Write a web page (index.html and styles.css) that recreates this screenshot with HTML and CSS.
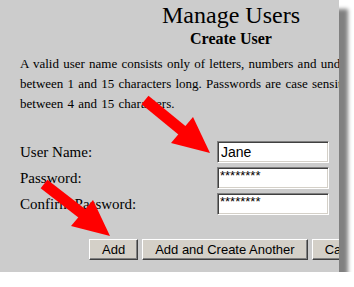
FILE: index.html
```html
<!DOCTYPE html>
<html lang="en">
<head>
  <meta charset="UTF-8" />
  <title>Manage Users</title>
  <link rel="stylesheet" href="styles.css">
</head>
<body>
  <div class="window">
    <div class="page">
      <h1>Manage Users</h1>
      <h3>Create User</h3>
      <p class="help">A valid user name consists only of letters, numbers and underscores and must be<br>
        between 1 and 15 characters long. Passwords are case sensitive and must be<br>
        between 4 and 15 characters.</p>

      <div class="form">
        <label>User Name:</label>
        <input class="field" type="text" value="Jane">
        <label>Password:</label>
        <input class="field secret" type="text" value="********">
        <label>Confirm Password:</label>
        <input class="field secret" type="text" value="********">
      </div>

      <div class="buttons">
        <button>Add</button>
        <button>Add and Create Another</button>
        <button>Cancel</button>
      </div>
    </div>

    <svg class="arrows" width="339" height="272" viewBox="0 0 339 272">
      <line x1="145" y1="100" x2="184" y2="132" stroke="#ff0000" stroke-width="11" />
      <polygon points="171,143 193,117 210,153" fill="#ff0000" />
      <line x1="44" y1="184" x2="84" y2="215" stroke="#ff0000" stroke-width="11" />
      <polygon points="71,226 93,200 110,236" fill="#ff0000" />
    </svg>
  </div>
</body>
</html>
```

FILE: styles.css
```css
body {
  margin: 0;
  padding: 0;
  background: #fff;
  font-family: 'Liberation Serif', 'Times New Roman', serif;
  color: #000;
}
.window {
  position: relative;
  width: 339px;
  height: 272px;
  background: #cccccc;
  overflow: hidden;
  box-shadow: 9px 9px 4px #808080;
}
.page {
  width: 422px;
  padding: 1px 0 0 20px;
}
h1 {
  margin: 0;
  font-size: 24px;
  font-weight: normal;
  line-height: 28px;
  text-align: center;
}
h3 {
  margin: 0;
  font-size: 16px;
  font-weight: bold;
  line-height: 20px;
  text-align: center;
}
.help {
  margin: 5px 0 0;
  font-size: 13px;
  line-height: 20px;
  word-spacing: 1px;
  white-space: nowrap;
}
.form {
  display: grid;
  grid-template-columns: 197px 112px;
  grid-auto-rows: 22px;
  row-gap: 4px;
  margin-top: 27px;
}
.form label {
  font-size: 15px;
  line-height: 22px;
}
.field {
  box-sizing: border-box;
  width: 112px;
  height: 22px;
  margin: 0;
  padding: 0 3px;
  background: #fff;
  border: 1px solid;
  border-color: #808080 #ffffff #ffffff #808080;
  box-shadow: inset 1px 1px #404040, inset -1px -1px #d4d0c8;
  font-family: 'Liberation Sans', Arial, sans-serif;
  font-size: 14px;
  color: #000;
  outline: none;
}
.field.secret {
  font-size: 13px;
  padding: 0 2px 5px;
}
.buttons {
  display: flex;
  gap: 4px;
  margin: 24px 0 0 69px;
}
button {
  box-sizing: border-box;
  height: 21px;
  margin: 0;
  padding: 0 12px;
  background: #d4d0c8;
  border: 1px solid;
  border-color: #ffffff #404040 #404040 #ffffff;
  box-shadow: inset -1px -1px #808080;
  font-family: 'Liberation Sans', Arial, sans-serif;
  font-size: 13px;
  color: #000;
  white-space: nowrap;
}
.arrows {
  position: absolute;
  left: 0;
  top: 0;
  pointer-events: none;
}
```
